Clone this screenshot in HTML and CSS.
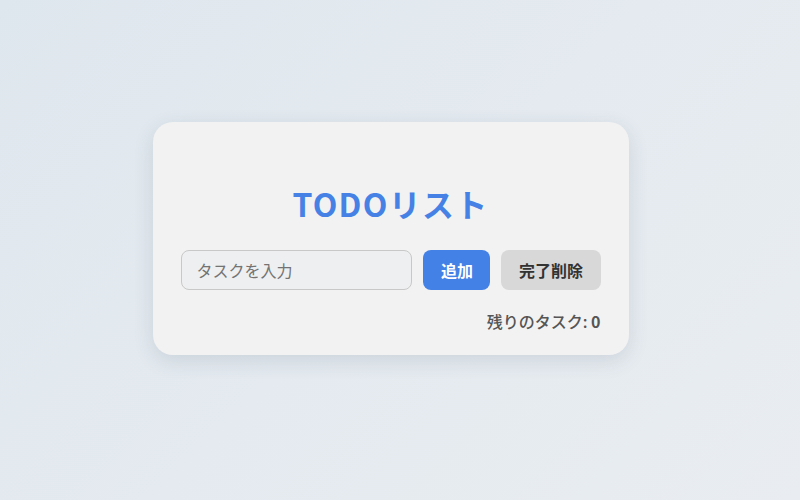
FILE: index.html
```html
<!DOCTYPE html>
<html lang="ja">
<head>
<meta charset="utf-8">
<title>TODOリスト</title>
<link rel="stylesheet" href="styles.css">
</head>
<body>
<div class="page">
  <div class="card">
    <h1 class="title">TODOリスト</h1>
    <div class="row">
      <input class="task-input" type="text" placeholder="タスクを入力">
      <button class="btn btn-add">追加</button>
      <button class="btn btn-clear">完了削除</button>
    </div>
    <ul class="list"></ul>
    <div class="count">残りのタスク: <strong>0</strong></div>
  </div>
</div>
</body>
</html>
```

FILE: styles.css
```css
* { box-sizing: border-box; }
html, body {
  margin: 0;
  height: 100%;
}
body {
  font-family: "Noto Sans CJK JP", "Noto Sans", sans-serif;
  background: linear-gradient(135deg, #dfe7ee 0%, #e9edf1 100%);
}
.page {
  min-height: 100vh;
  display: flex;
  align-items: center;
  justify-content: center;
  padding: 0 19px 23px 0;
}
.card {
  width: 476px;
  background: #f2f2f2;
  border-radius: 20px;
  padding: 61px 28px 22px;
  box-shadow: 0 6px 20px rgba(60, 80, 100, 0.14);
}
.title {
  margin: 0 0 27px;
  font-size: 32px;
  line-height: 40px;
  font-weight: 700;
  letter-spacing: 1.3px;
  text-align: center;
  color: #4681e6;
}
.row {
  display: flex;
  gap: 11px;
  height: 40px;
}
.task-input {
  flex: 1;
  min-width: 0;
  height: 40px;
  border: 1px solid #c8c8c8;
  border-radius: 8px;
  background: #eeeff0;
  padding: 0 15px;
  font-family: inherit;
  font-size: 16px;
  color: #333;
  outline: none;
}
.task-input::placeholder { color: #737373; }
.btn {
  height: 40px;
  border: none;
  border-radius: 8px;
  padding: 0 17.5px;
  font-family: inherit;
  font-size: 16px;
  font-weight: 700;
  cursor: pointer;
}
.btn-add {
  background: #4481e6;
  color: #fff;
}
.btn-clear {
  background: #d8d8d8;
  color: #333;
}
.list {
  list-style: none;
  margin: 0;
  padding: 0;
}
.count {
  margin-top: 19px;
  text-align: right;
  font-size: 16px;
  line-height: 24px;
  font-weight: 500;
  color: #555;
}
.count strong { font-weight: 700; }
```
